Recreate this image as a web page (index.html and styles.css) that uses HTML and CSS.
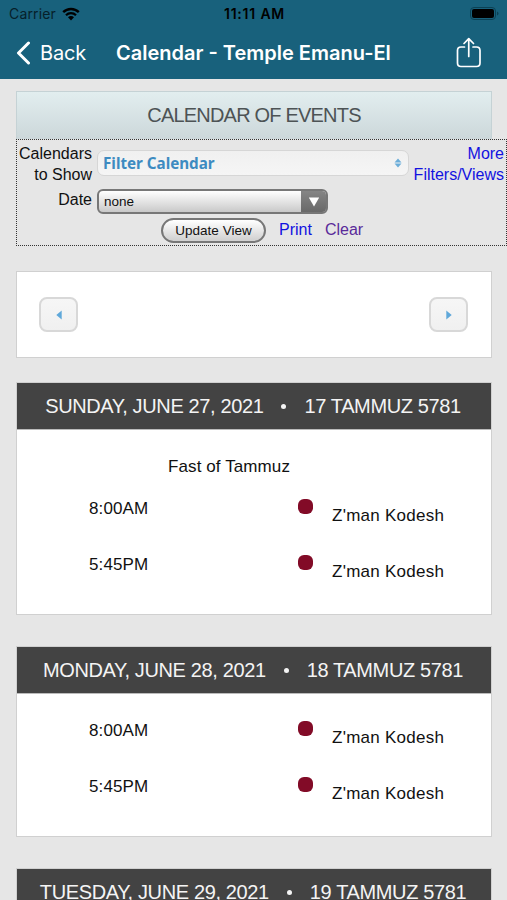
FILE: index.html
```html
<!DOCTYPE html>
<html lang="en">
<head>
    <meta charset="UTF-8">
    <meta name="viewport" content="width=device-width, initial-scale=1.0">
    <title>Calendar - Temple Emanu-El</title>
    <link rel="stylesheet" href="styles.css">
</head>
<body>
    <header class="app-header">
        <div class="status-bar">
            <div class="carrier">
                <span>Carrier</span>
                <svg class="wifi" viewBox="0 0 18 14" width="18" height="14">
                    <path d="M1.2 5.2 A11 11 0 0 1 16.8 5.2" fill="none" stroke="#000" stroke-width="2.4"/>
                    <path d="M4 8.2 A7 7 0 0 1 14 8.2" fill="none" stroke="#000" stroke-width="2.2"/>
                    <path d="M6 10.3 A4.2 4.2 0 0 1 12 10.3 L9 13.4 Z" fill="#000"/>
                </svg>
            </div>
            <div class="clock">11:11 AM</div>
            <svg class="battery" viewBox="0 0 30 14" width="30" height="14">
                <rect x="0.5" y="0.5" width="25" height="12" rx="3.5" fill="none" stroke="#0b4154"/>
                <rect x="2" y="2" width="22" height="9" rx="2" fill="#000"/>
                <path d="M27 4.5 V8.5 Q28.5 8 28.5 6.5 Q28.5 5 27 4.5 Z" fill="#0b4154"/>
            </svg>
        </div>
        <div class="nav-bar">
            <a class="back">
                <svg viewBox="0 0 16 24" width="16" height="24">
                    <path d="M13.5 2 L3.5 12 L13.5 22" fill="none" stroke="#fff" stroke-width="3" stroke-linecap="round" stroke-linejoin="round"/>
                </svg>
                <span>Back</span>
            </a>
            <h1>Calendar - Temple Emanu-El</h1>
            <svg class="share" viewBox="0 0 26 32" width="26" height="32">
                <g fill="none" stroke="#fff" stroke-width="1.7" stroke-linecap="round" stroke-linejoin="round">
                    <path d="M8.5 10 H5 Q1.5 10 1.5 13.5 V26 Q1.5 29.5 5 29.5 H20.5 Q24 29.5 24 26 V13.5 Q24 10 20.5 10 H17"/>
                    <path d="M12.75 19.5 V2 M8 6.5 L12.75 1.7 L17.5 6.5"/>
                </g>
            </svg>
        </div>
    </header>

    <main>
        <h2 class="page-title">CALENDAR OF EVENTS</h2>

        <form class="filters">
            <label class="calendars-label">Calendars<br>to Show</label>
            <div class="filter-select">
                <span>Filter Calendar</span>
                <svg viewBox="0 0 8 10" width="8" height="10">
                    <path d="M0.5 4.4 L4 0.5 L7.5 4.4 Z M0.5 5.6 H7.5 L4 9.5 Z" fill="#6badd9"/>
                </svg>
            </div>
            <a class="more" href="#">More<br>Filters/Views</a>
            <label class="date-label">Date</label>
            <div class="date-select">
                <span>none</span>
                <div class="date-arrow">
                    <svg viewBox="0 0 12 10" width="12" height="10">
                        <path d="M0.8 0.5 H11.2 L6 9.5 Z" fill="#fff"/>
                    </svg>
                </div>
            </div>
            <div class="actions">
                <button type="button">Update View</button>
                <a class="print" href="#">Print</a>
                <a class="clear" href="#">Clear</a>
            </div>
        </form>

        <div class="pager">
            <button type="button">
                <svg viewBox="0 0 6 10" width="6" height="10"><path d="M5.7 0.5 V9.5 L0.3 5 Z" fill="#5fa8da"/></svg>
            </button>
            <button type="button">
                <svg viewBox="0 0 6 10" width="6" height="10"><path d="M0.3 0.5 V9.5 L5.7 5 Z" fill="#5fa8da"/></svg>
            </button>
        </div>

        <section class="day">
            <h3><span class="date">SUNDAY, JUNE 27, 2021</span><span class="bullet"></span><span class="hebrew">17 TAMMUZ 5781</span></h3>
            <div class="day-body">
                <p class="holiday">Fast of Tammuz</p>
                <div class="event"><span class="time">8:00AM</span><span class="dot"></span><span class="name">Z'man Kodesh</span></div>
                <div class="event"><span class="time">5:45PM</span><span class="dot"></span><span class="name">Z'man Kodesh</span></div>
            </div>
        </section>

        <section class="day">
            <h3><span class="date">MONDAY, JUNE 28, 2021</span><span class="bullet"></span><span class="hebrew">18 TAMMUZ 5781</span></h3>
            <div class="day-body">
                <div class="event"><span class="time">8:00AM</span><span class="dot"></span><span class="name">Z'man Kodesh</span></div>
                <div class="event"><span class="time">5:45PM</span><span class="dot"></span><span class="name">Z'man Kodesh</span></div>
            </div>
        </section>

        <section class="day">
            <h3><span class="date">TUESDAY, JUNE 29, 2021</span><span class="bullet"></span><span class="hebrew">19 TAMMUZ 5781</span></h3>
        </section>
    </main>
</body>
</html>
```
FILE: styles.css
```css
* {
    box-sizing: border-box;
}
body {
    margin: 0;
    height: 900px;
    overflow: hidden;
    background-color: #e6e6e6;
    color: #111;
    font-family: "Liberation Sans", Arial, sans-serif;
    font-size: 17px;
}
h1, h2, h3, p {
    margin: 0;
    font-weight: normal;
}
a {
    text-decoration: none;
}
svg {
    display: block;
    flex: none;
}

/* header */
.app-header {
    height: 79px;
    background-color: #18617c;
    font-family: Inter, sans-serif;
}
.status-bar {
    height: 27px;
    padding: 0 7px 0 9px;
    display: grid;
    grid-template-columns: 1fr auto 1fr;
    align-items: center;
    color: #06202a;
    font-size: 14px;
}
.carrier {
    display: flex;
    align-items: center;
    gap: 6px;
    letter-spacing: 0.15px;
}
.clock {
    color: #000;
    font-weight: 600;
    font-size: 14px;
    letter-spacing: 0.8px;
}
.battery {
    justify-self: end;
}
.nav-bar {
    height: 52px;
    padding: 0 25px 0 15px;
    display: flex;
    align-items: center;
    color: #fff;
}
.back {
    width: 101px;
    display: flex;
    align-items: center;
    gap: 9px;
    font-size: 20px;
    letter-spacing: -0.2px;
}
.nav-bar h1 {
    flex: 1;
    font-size: 20px;
    font-weight: 600;
    white-space: nowrap;
}

/* filters */
main {
    padding: 12px 0 0 16px;
}
.page-title {
    width: 476px;
    height: 48px;
    border: 1px solid #c5d2d5;
    border-bottom: none;
    background: linear-gradient(#e2eeef, #ccd7da);
    color: #4d5355;
    font-size: 20px;
    line-height: 47px;
    text-align: center;
    letter-spacing: -0.8px;
}
.filters {
    height: 107px;
    padding-top: 4px;
    border: 1px dotted #333;
    display: grid;
    grid-template-columns: 75px 312px 1fr;
    grid-template-rows: 42px 31px 26px;
    column-gap: 5px;
    font-size: 16px;
    line-height: 20.5px;
}
.calendars-label, .date-label {
    text-align: right;
}
.date-label {
    padding-top: 4px;
}
.filter-select {
    height: 26px;
    margin-top: 6px;
    padding: 0 6px 0 5px;
    display: flex;
    align-items: center;
    justify-content: space-between;
    border: 1px solid #d6d6d6;
    border-radius: 7px;
    background: linear-gradient(#f0f0f0, #f5f5f5);
    color: #3d8bc1;
    font-family: "Noto Sans", sans-serif;
    font-size: 15.2px;
    font-weight: bold;
}
.more {
    margin-left: -2px;
    padding-right: 2px;
    color: #1212e0;
    text-align: right;
}
.date-select {
    grid-column: 2 / 4;
    width: 231px;
    height: 25px;
    margin-top: 3px;
    padding-left: 5px;
    display: flex;
    justify-content: space-between;
    align-items: center;
    border: 2px solid #777;
    border-radius: 6px;
    background: linear-gradient(#fff, #c9c9c9);
    font-size: 13.5px;
    overflow: hidden;
}
.date-select span {
    padding-top: 2px;
}
.date-arrow {
    width: 25px;
    height: 25px;
    display: flex;
    align-items: center;
    justify-content: center;
    background: linear-gradient(#888, #666);
}
.actions {
    grid-column: 2 / 4;
    display: flex;
    align-items: center;
    padding-left: 64px;
    gap: 13px;
}
.actions button {
    width: 105px;
    height: 25px;
    padding: 0;
    border: 2px solid #777;
    border-radius: 13px;
    background: linear-gradient(#fff, #cfcfcf);
    color: #111;
    font-family: inherit;
    font-size: 13.5px;
}
.actions a {
    padding-top: 1px;
}
.print {
    color: #1212e0;
}
.clear {
    color: #5a2a9a;
}

/* previous / next */
.pager {
    width: 476px;
    height: 87px;
    margin-top: 25px;
    padding: 0 23px 0 22px;
    display: flex;
    align-items: center;
    justify-content: space-between;
    border: 1px solid #d0d0d0;
    background-color: #fff;
}
.pager button {
    width: 39px;
    height: 35px;
    padding: 0;
    display: flex;
    align-items: center;
    justify-content: center;
    border: 2px solid #d8d8d8;
    border-radius: 8px;
    background: linear-gradient(#f6f6f6, #f0f0f0);
}

/* days */
.day {
    width: 476px;
    margin-bottom: 31px;
    border: 1px solid #d0d0d0;
    background-color: #fff;
}
.pager + .day {
    margin-top: 24px;
}
.day h3 {
    height: 47px;
    display: flex;
    align-items: center;
    justify-content: center;
    border-bottom: 1px solid #bbb;
    background-color: #434343;
    color: #f4f4f4;
    font-size: 20px;
    letter-spacing: -0.37px;
    white-space: nowrap;
}
.bullet {
    width: 5px;
    height: 5px;
    margin: 0 18px;
    border-radius: 50%;
    background-color: #f4f4f4;
}
.hebrew {
    margin-right: 2px;
}
.day-body {
    padding: 27px 0 3px 72px;
}
.holiday {
    height: 42px;
    padding-left: 79px;
    line-height: 20px;
    letter-spacing: 0.1px;
}
.event {
    height: 56px;
    display: grid;
    grid-template-columns: 209px 34px 1fr;
    line-height: 20px;
}
.time {
    letter-spacing: 0.1px;
}
.dot {
    width: 15px;
    height: 15px;
    border-radius: 6px;
    background-color: #820b27;
}
.name {
    padding-top: 7px;
    letter-spacing: 0.25px;
}
```
